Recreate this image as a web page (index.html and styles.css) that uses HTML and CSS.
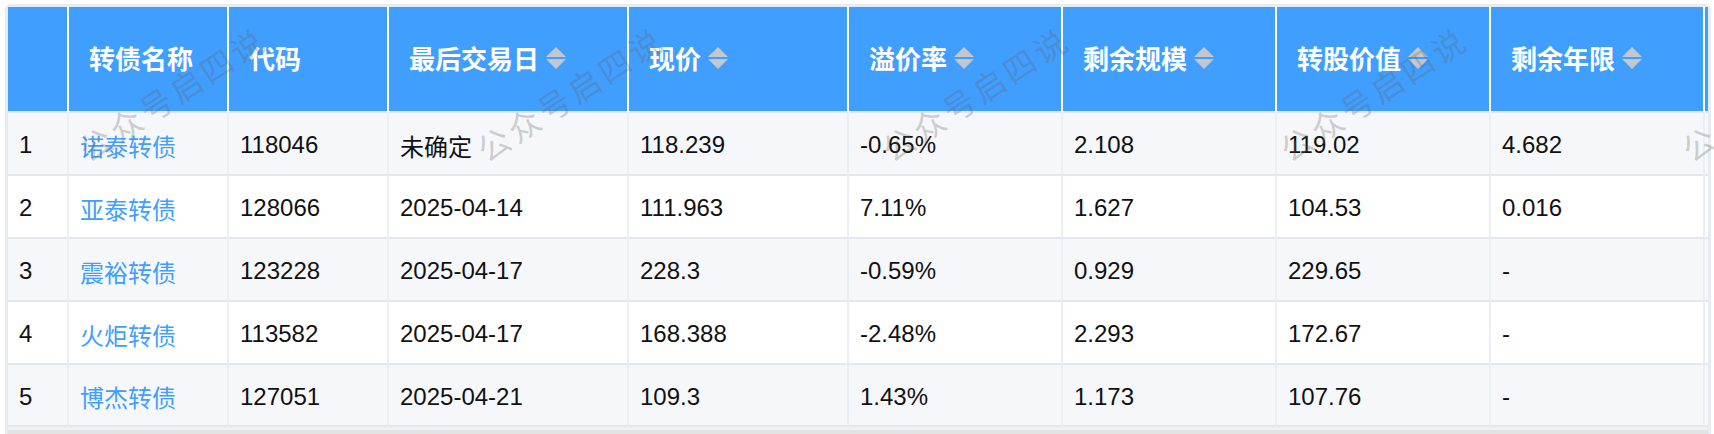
FILE: index.html
```html
<!DOCTYPE html>
<html lang="zh-CN">
<head>
<meta charset="utf-8">
<title>转债列表</title>
<link rel="stylesheet" href="styles.css">
</head>
<body>
<div class="page">
  <div class="card">
    <div class="table-scroll">
      <table class="bond-table">
        <colgroup>
          <col class="c-idx"><col class="c-name"><col class="c-code"><col class="c-date"><col class="c-price">
          <col class="c-w"><col class="c-w"><col class="c-w"><col class="c-w"><col class="c-extra">
        </colgroup>
        <thead>
          <tr class="head-row">
            <th></th>
            <th>转债名称</th>
            <th>代码</th>
            <th><span class="th-in">最后交易日<svg class="sort" viewBox="0 0 20 22" width="20" height="22"><polygon points="10,0 20,10 0,10"/><polygon points="0,12 20,12 10,22"/></svg></span></th>
            <th><span class="th-in">现价<svg class="sort" viewBox="0 0 20 22" width="20" height="22"><polygon points="10,0 20,10 0,10"/><polygon points="0,12 20,12 10,22"/></svg></span></th>
            <th><span class="th-in">溢价率<svg class="sort" viewBox="0 0 20 22" width="20" height="22"><polygon points="10,0 20,10 0,10"/><polygon points="0,12 20,12 10,22"/></svg></span></th>
            <th><span class="th-in">剩余规模<svg class="sort" viewBox="0 0 20 22" width="20" height="22"><polygon points="10,0 20,10 0,10"/><polygon points="0,12 20,12 10,22"/></svg></span></th>
            <th><span class="th-in">转股价值<svg class="sort" viewBox="0 0 20 22" width="20" height="22"><polygon points="10,0 20,10 0,10"/><polygon points="0,12 20,12 10,22"/></svg></span></th>
            <th><span class="th-in">剩余年限<svg class="sort" viewBox="0 0 20 22" width="20" height="22"><polygon points="10,0 20,10 0,10"/><polygon points="0,12 20,12 10,22"/></svg></span></th>
            <th></th>
          </tr>
        </thead>
        <tbody>
          <tr class="row stripe">
            <td>1</td><td><a class="bond-link">诺泰转债</a></td><td>118046</td><td>未确定</td><td>118.239</td><td>-0.65%</td><td>2.108</td><td>119.02</td><td>4.682</td><td></td>
          </tr>
          <tr class="row">
            <td>2</td><td><a class="bond-link">亚泰转债</a></td><td>128066</td><td>2025-04-14</td><td>111.963</td><td>7.11%</td><td>1.627</td><td>104.53</td><td>0.016</td><td></td>
          </tr>
          <tr class="row stripe">
            <td>3</td><td><a class="bond-link">震裕转债</a></td><td>123228</td><td>2025-04-17</td><td>228.3</td><td>-0.59%</td><td>0.929</td><td>229.65</td><td>-</td><td></td>
          </tr>
          <tr class="row">
            <td>4</td><td><a class="bond-link">火炬转债</a></td><td>113582</td><td>2025-04-17</td><td>168.388</td><td>-2.48%</td><td>2.293</td><td>172.67</td><td>-</td><td></td>
          </tr>
          <tr class="row stripe last">
            <td>5</td><td><a class="bond-link">博杰转债</a></td><td>127051</td><td>2025-04-21</td><td>109.3</td><td>1.43%</td><td>1.173</td><td>107.76</td><td>-</td><td></td>
          </tr>
        </tbody>
      </table>
    </div>
    <div class="hscroll-gap"></div>
    <div class="hscroll"></div>
  </div>
  <div class="watermarks" aria-hidden="true">
    <span class="wm wm1">公众号启四说</span>
    <span class="wm wm2">公众号启四说</span>
    <span class="wm wm3">公众号启四说</span>
    <span class="wm wm4">公众号启四说</span>
    <span class="wm wm5">公众号启四说</span>
  </div>
</div>
</body>
</html>
```

FILE: styles.css
```css
html, body {
  margin: 0;
  padding: 0;
  background: #ffffff;
}

body {
  font-family: "Liberation Sans", "Noto Sans CJK SC", sans-serif;
  color: #111111;
}

.page {
  position: relative;
  padding: 4px 0 0 5px;
  height: 430px;
  overflow: hidden;
}

.card {
  width: 1700px;
  border: 3px solid #e8ebf0;
  border-bottom: none;
  border-radius: 6px 6px 0 0;
  background: #ffffff;
}

.table-scroll {
  overflow: hidden;
  width: 1700px;
}

.bond-table {
  table-layout: fixed;
  border-collapse: separate;
  border-spacing: 0;
  width: 1897px;
}

.c-idx { width: 61px; }
.c-name { width: 160px; }
.c-code { width: 160px; }
.c-date { width: 240px; }
.c-price { width: 220px; }
.c-w { width: 214px; }
.c-extra { width: 262px; }

.bond-table th,
.bond-table td {
  box-sizing: border-box;
  text-align: left;
  vertical-align: middle;
  white-space: nowrap;
  overflow: hidden;
}

.head-row { height: 106px; }

.bond-table th {
  background: #409eff;
  color: #ffffff;
  font-size: 26px;
  font-weight: 600;
  padding: 0 0 3px 20px;
  border-right: 2px solid #ffffff;
  border-bottom: 2px solid #e4e8ee;
}

.th-in {
  display: inline-flex;
  align-items: center;
}

.sort {
  margin-left: 7px;
  fill: #c4c7ce;
  flex: none;
}

.row { height: 63px; }
.row.last { height: 62px; }

.bond-table td {
  font-size: 24px;
  padding: 3px 0 0 11px;
  border-right: 2px solid #ebeef5;
  border-bottom: 2px solid #e4e8ee;
  background: #ffffff;
}

.row.stripe td { background: #f5f7fa; }

.bond-link {
  color: #409eff;
  text-decoration: none;
  cursor: pointer;
}

.hscroll-gap {
  height: 3px;
  background: #eef1f6;
}

.hscroll {
  height: 10px;
  background: #e3e3e3;
}

.watermarks {
  position: absolute;
  inset: 0;
  pointer-events: none;
}

.wm {
  position: absolute;
  top: 74px;
  width: 220px;
  text-align: center;
  font-family: "Noto Sans CJK SC", sans-serif;
  font-size: 32px;
  font-weight: 400;
  letter-spacing: 4px;
  line-height: 38px;
  color: rgba(100, 100, 100, 0.3);
  transform: rotate(-33deg);
  white-space: nowrap;
}

.wm1 { left: 62px; }
.wm2 { left: 460px; }
.wm3 { left: 865px; }
.wm4 { left: 1263px; }
.wm5 { left: 1665px; }
```
